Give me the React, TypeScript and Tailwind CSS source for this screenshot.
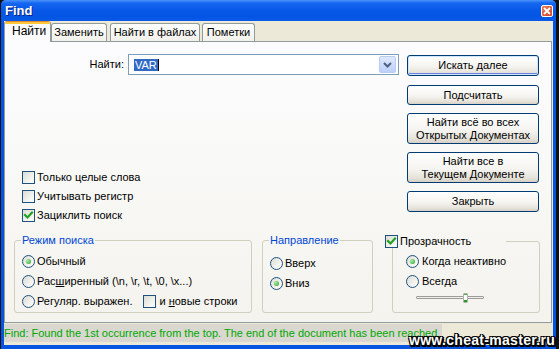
import React from "react";

function Check({ checked }: { checked?: boolean }) {
  return (
    <span className="w-[13px] h-[13px] shrink-0 border border-[#1c5180] bg-[linear-gradient(135deg,#dcdcd5_0%,#f2f2ee_60%,#ffffff_100%)] flex items-center justify-center">
      {checked && (
        <svg width="11" height="11" viewBox="0 0 11 11">
          <path d="M2 5 L4.5 7.5 L9 2.5" stroke="#21a121" strokeWidth="2.2" fill="none" strokeLinecap="square" />
        </svg>
      )}
    </span>
  );
}

function Radio({ on }: { on?: boolean }) {
  return (
    <span className="w-[13px] h-[13px] shrink-0 rounded-full border border-[#1c5180] bg-[linear-gradient(135deg,#dcdcd5_0%,#f2f2ee_60%,#ffffff_100%)] flex items-center justify-center">
      {on && <span className="w-[5px] h-[5px] rounded-full bg-[radial-gradient(circle_at_35%_35%,#a8eda8,#21a121)]" />}
    </span>
  );
}

function Btn({ children, h, def }: { children: React.ReactNode; h: string; def?: boolean }) {
  return (
    <div
      className={`w-[132px] ${h} rounded-[3px] border border-[#003c74] bg-[linear-gradient(180deg,#ffffff_0%,#f5f4f0_55%,#e6e3da_85%,#d6d0c5_100%)] flex items-center justify-center text-center leading-[13px] text-black ${
        def ? "shadow-[inset_0_0_0_1px_#cee7ff,inset_0_-1px_0_1px_#6982ee]" : ""
      }`}
    >
      <div>{children}</div>
    </div>
  );
}

function Row({ children }: { children: React.ReactNode }) {
  return <div className="flex items-center gap-[2px] h-[13px] leading-[13px] whitespace-nowrap">{children}</div>;
}

export default function App() {
  return (
    <div className="w-[559px] h-[349px] bg-[#101010] overflow-hidden relative font-['Liberation_Sans',Arial,sans-serif] text-[11px] text-black">
      <div className="ml-[1px] w-[555px] h-[349px] flex flex-col bg-[#0553e1] rounded-t-[5px]">
        {/* title bar */}
        <div className="h-[21px] shrink-0 flex items-center justify-between pl-[4px] pr-[3px] rounded-t-[5px] bg-[linear-gradient(180deg,#4a93fb_0%,#1566f0_15%,#0858e8_50%,#0555e5_80%,#0a5ae8_100%)]">
          <span className="text-white font-bold text-[13px] leading-[13px] [text-shadow:1px_1px_0_#0a1f7a]">Find</span>
          <div className="w-[12px] h-[12px] mt-[1px] rounded-[2px] border border-white bg-[linear-gradient(135deg,#e8805e,#d6401c)] flex items-center justify-center">
            <svg width="8" height="8" viewBox="0 0 8 8">
              <path d="M1 1 L7 7 M7 1 L1 7" stroke="white" strokeWidth="1.8" />
            </svg>
          </div>
        </div>
        {/* client */}
        <div className="flex-1 mx-[3px] mb-[4px] bg-[#ece9d8] flex flex-col">
          {/* tabs */}
          <div className="flex items-end h-[20px] relative z-10 shrink-0">
            <div className="w-[47px] h-[21px] -mb-[1px] rounded-t-[3px] border-x border-[#919b9c] bg-[#fcfcfe] flex flex-col overflow-hidden">
              <div className="h-[1px] bg-[#e68b2c]" />
              <div className="h-[2px] bg-[#ffc73c]" />
              <div className="flex-1 pl-[7px] text-[12px] leading-[15px]">Найти</div>
            </div>
            <div className="w-[56px] h-[18px] rounded-t-[3px] border border-b-0 border-[#919b9c] bg-[linear-gradient(180deg,#ffffff,#f1f0ea)] flex items-center justify-center">Заменить</div>
            <div className="w-[90px] h-[18px] ml-[3px] rounded-t-[3px] border border-b-0 border-[#919b9c] bg-[linear-gradient(180deg,#ffffff,#f1f0ea)] flex items-center justify-center">Найти в файлах</div>
            <div className="w-[53px] h-[18px] ml-[2px] rounded-t-[3px] border border-b-0 border-[#919b9c] bg-[linear-gradient(180deg,#ffffff,#f1f0ea)] flex items-center justify-center">Пометки</div>
          </div>
          {/* panel */}
          <div className="h-[282px] shrink-0 mr-[1px] border border-[#919b9c] bg-[linear-gradient(180deg,#fcfcfe_0%,#f9f9f7_40%,#f4f3ee_100%)] flex flex-col">
            <div className="flex">
              <div className="w-[394px] flex flex-col">
                <div className="flex items-center mt-[12px] h-[21px]">
                  <span className="w-[119px] text-right">Найти:</span>
                  <div className="ml-[4px] w-[271px] h-[21px] border border-[#7f9db9] bg-white flex items-center pl-[5px] pr-[2px]">
                    <span className="bg-[#316ac5] text-white px-[1px] leading-[12px] h-[12px]">VAR</span>
                    <span className="w-[1px] h-[12px] bg-black" />
                    <div className="flex-1" />
                    <div className="w-[17px] h-[17px] rounded-[2px] border border-[#b9ccf6] bg-[linear-gradient(180deg,#dfe8fd,#bdd0fb)] flex items-center justify-center">
                      <svg width="9" height="6" viewBox="0 0 9 6">
                        <path d="M1 1 L4.5 4.5 L8 1" stroke="#4d6185" strokeWidth="2" fill="none" />
                      </svg>
                    </div>
                  </div>
                </div>
                <div className="mt-[96px] ml-[17px] flex flex-col gap-[6px]">
                  <Row>
                    <Check />
                    <span>Только целые слова</span>
                  </Row>
                  <Row>
                    <Check />
                    <span>Учитывать регистр</span>
                  </Row>
                  <Row>
                    <Check checked />
                    <span>Зациклить поиск</span>
                  </Row>
                </div>
              </div>
              <div className="ml-[8px] mt-[13px] flex flex-col">
                <Btn h="h-[21px]" def>
                  Искать далее
                </Btn>
                <div className="h-[9px]" />
                <Btn h="h-[20px]">Подсчитать</Btn>
                <div className="h-[8px]" />
                <Btn h="h-[31px]">
                  Найти всё во всех
                  <br />
                  Открытых Документах
                </Btn>
                <div className="h-[8px]" />
                <Btn h="h-[31px]">
                  Найти все в<br />
                  Текущем Документе
                </Btn>
                <div className="h-[8px]" />
                <Btn h="h-[21px]">Закрыть</Btn>
              </div>
            </div>
            {/* groups */}
            <div className="flex mt-[12px]">
              <fieldset className="ml-[9px] w-[238px] h-[79px] border border-[#d0d0bf] rounded-[3px] pl-[7px]">
                <legend className="text-[#0046d5] leading-[13px] px-[1px] -ml-[1px]">Режим поиска</legend>
                <div className="mt-[8px] flex flex-col gap-[7px]">
                  <Row>
                    <Radio on />
                    <span>Обычный</span>
                  </Row>
                  <Row>
                    <Radio />
                    <span>
                      Рас<span className="underline">ш</span>иренный (\n, \r, \t, \0, \x...)
                    </span>
                  </Row>
                  <Row>
                    <Radio />
                    <span>Регуляр. выражен.</span>
                    <span className="ml-[7px]" />
                    <Check />
                    <span className="ml-[1px]">
                      и <span className="underline">н</span>овые строки
                    </span>
                  </Row>
                </div>
              </fieldset>
              <fieldset className="ml-[10px] w-[111px] h-[79px] border border-[#d0d0bf] rounded-[3px] pl-[7px]">
                <legend className="text-[#0046d5] leading-[13px] px-[1px] -ml-[1px]">Направление</legend>
                <div className="mt-[10px] flex flex-col gap-[7px]">
                  <Row>
                    <Radio />
                    <span>Вверх</span>
                  </Row>
                  <Row>
                    <Radio on />
                    <span>Вниз</span>
                  </Row>
                </div>
              </fieldset>
              <fieldset className="ml-[19px] w-[148px] h-[79px] border border-[#d0d0bf] rounded-[3px] pl-[13px]">
                <legend className="-ml-[21px] w-[121px] leading-[13px] h-[14px] pt-[1px] flex items-center gap-[2px]">
                  <Check checked />
                  <span>Прозрачность</span>
                </legend>
                <div className="mt-[7px] flex flex-col gap-[7px]">
                  <Row>
                    <Radio on />
                    <span className="ml-[1px]">Когда неактивно</span>
                  </Row>
                  <Row>
                    <Radio />
                    <span className="ml-[1px]">Всегда</span>
                  </Row>
                </div>
                <div className="mt-[5px] ml-[10px] w-[68px] h-[10px] relative">
                  <div className="absolute left-0 right-0 top-[3px] h-[3px] rounded-[1px] border border-[#9d9c99] bg-[#f0f0ea]" />
                  <div className="absolute left-[47px] top-0 w-[5px] h-[10px] rounded-[1px] border border-[#b0b0a8] bg-white flex flex-col justify-between">
                    <div className="h-[1px] bg-[#3cb83c]" />
                    <div className="h-[2px] bg-[#21a121]" />
                  </div>
                </div>
              </fieldset>
            </div>
          </div>
          {/* status bar */}
          <div className="mt-[1px] h-[18px] shrink-0 flex">
            <div className="min-w-[433px] pr-[2px] bg-[#d9d7d0] text-[#00a800] leading-[18px] whitespace-nowrap">
              Find: Found the 1st occurrence from the top. The end of the document has been reached.
            </div>
          </div>
        </div>
      </div>
      <div className="absolute right-[4px] bottom-[1px] text-white font-bold text-[14px] leading-[16px] tracking-[0.3px] [text-shadow:1px_1px_0_#000,-1px_-1px_0_#000,1px_-1px_0_#000,-1px_1px_0_#000,2px_2px_0_#000,0_2px_0_#000,2px_0_0_#000]">
        www.cheat-master.ru
      </div>
    </div>
  );
}
